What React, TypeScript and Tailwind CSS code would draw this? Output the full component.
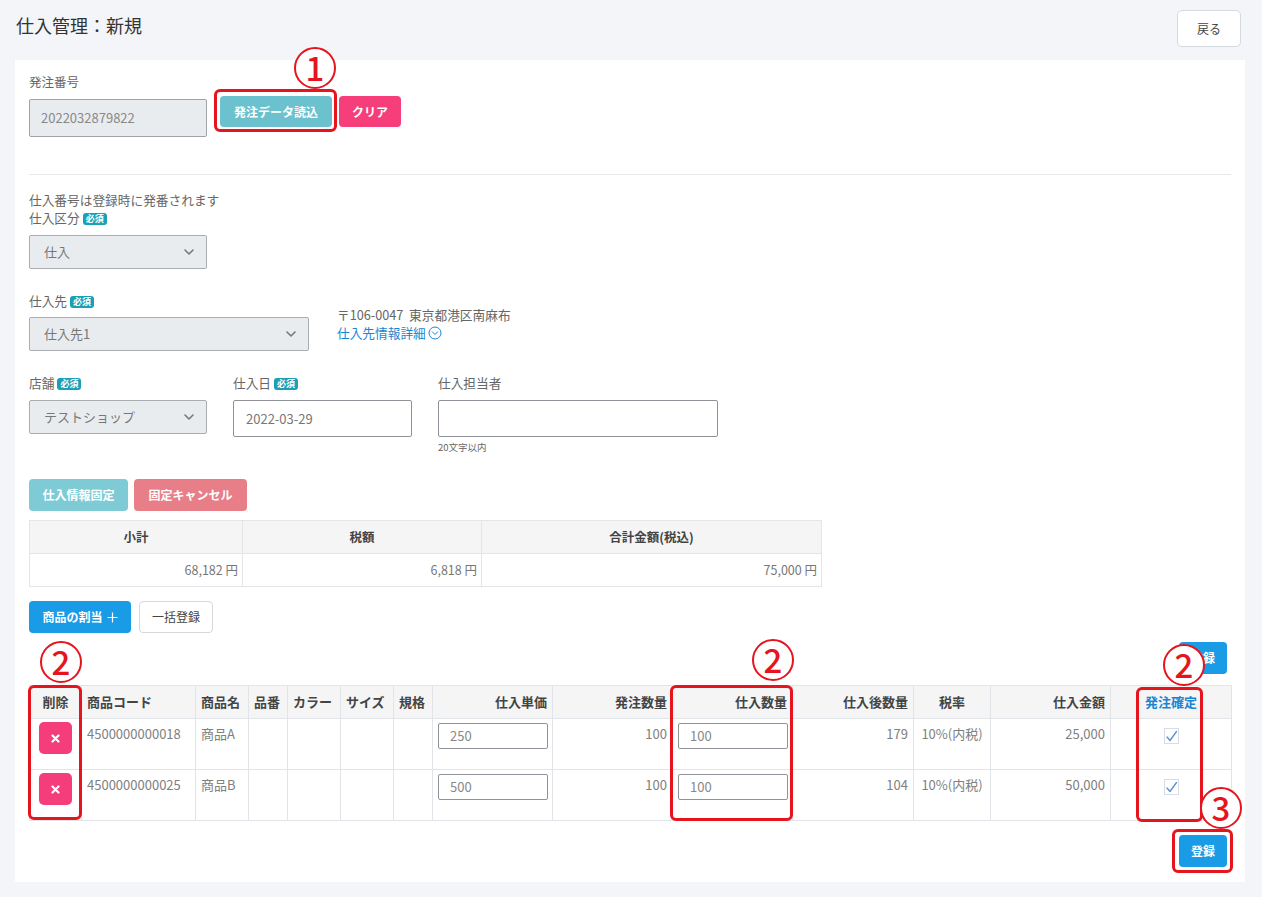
import React from 'react';

function Req() {
  return (
    <span className="ml-[3px] inline-block rounded-[3px] bg-[#1a9fb5] px-[3px] align-[1px] text-[9px] font-bold leading-[12px] text-white">
      必須
    </span>
  );
}

function FakeSelect({ value, width }: { value: string; width: string }) {
  return (
    <div className={`${width} flex h-[34px] items-center justify-between rounded-[2px] border border-[#a9adb2] bg-[#e9ecef] pl-[14px] pr-[12px] text-[13px] text-[#777]`}>
      <span>{value}</span>
      <svg width="10" height="6" viewBox="0 0 10 6" fill="none">
        <path d="M1 1l4 4 4-4" stroke="#777" strokeWidth="1.6" strokeLinecap="round" strokeLinejoin="round" />
      </svg>
    </div>
  );
}

function Circled({ n, x, y }: { n: string; x: number; y: number }) {
  return (
    <div
      className="absolute flex h-[42px] w-[42px] items-center justify-center rounded-full border-[2.5px] border-[#e5141d] bg-white text-[33px] font-medium leading-none text-[#e5141d]"
      style={{ left: x - 21, top: y - 21 }}
    >
      <span className="-mt-[1px]">{n}</span>
    </div>
  );
}

function RedBox({ x, y, w, h }: { x: number; y: number; w: number; h: number }) {
  return (
    <div
      className="pointer-events-none absolute rounded-[6px] border-[3px] border-[#e5141d]"
      style={{ left: x, top: y, width: w, height: h }}
    />
  );
}

function Check() {
  return (
    <div className="mx-auto mt-[9px] flex h-[16px] w-[15px] items-center justify-center border border-[#d6dde6] bg-white">
      <svg width="13" height="12" viewBox="0 0 13 12" fill="none">
        <path d="M2 7l3 3.5L11.5 1.5" stroke="#5a8fd0" strokeWidth="1.3" strokeLinecap="round" strokeLinejoin="round" />
      </svg>
    </div>
  );
}

function DelBtn() {
  return (
    <div className="mx-auto mt-[3px] flex h-[32px] w-[33px] items-center justify-center rounded-[5px] bg-[#f53d7c]">
      <svg width="9" height="9" viewBox="0 0 9 9">
        <path d="M1.5 1.5l6 6M7.5 1.5l-6 6" stroke="white" strokeWidth="2.2" strokeLinecap="round" />
      </svg>
    </div>
  );
}

const rows = [
  { code: '4500000000018', name: '商品A', price: '250', order: '100', qty: '100', after: '179', amount: '25,000' },
  { code: '4500000000025', name: '商品B', price: '500', order: '100', qty: '100', after: '104', amount: '50,000' },
];

export default function App() {
  const th = 'border border-[#e1e5ea] px-[5px] h-[33px] text-[13px] font-bold text-[#444]';
  const td = 'border border-[#e1e5ea] px-[5px] pt-[6px] align-top text-[13px] leading-[18px] text-[#808080] h-[51px]';
  return (
    <div className="relative min-h-[897px] bg-[#f3f5f9] font-['Noto_Sans_CJK_JP','Noto_Sans',sans-serif] text-[#555]">
      <div className="flex items-start justify-between pl-[16px] pr-[21px] pt-[10px]">
        <h1 className="mt-[3px] text-[18px] leading-[24px] text-[#333]">仕入管理：新規</h1>
        <button className="h-[37px] w-[64px] rounded-[5px] border border-[#d5dae0] bg-white text-[12px] text-[#444]">戻る</button>
      </div>

      <div className="ml-[15px] mr-[17px] mt-[13px] bg-white px-[14px] pb-[15px] pt-[13px]">
        <div className="text-[12.5px] leading-[18px] text-[#666]">発注番号</div>
        <div className="mt-[5px] flex items-start">
          <div className="mt-[3px] flex h-[38px] w-[178px] items-center rounded-[2px] border border-[#a0a4a9] bg-[#e9ecef] pl-[11px] text-[13px] text-[#888]">
            2022032879822
          </div>
          <button className="ml-[13px] h-[31px] w-[112px] rounded-[4px] bg-[#6bc1cd] text-[12px] font-bold text-white">発注データ読込</button>
          <button className="ml-[7px] h-[31px] w-[62px] rounded-[4px] bg-[#f63e7a] text-[12px] font-bold text-white">クリア</button>
        </div>

        <div className="mt-[37px] border-t border-[#e6e8eb]" />

        <div className="mt-[16px] text-[12.7px] leading-[18px] text-[#666]">仕入番号は登録時に発番されます</div>
        <div className="text-[12.7px] leading-[18px] text-[#666]">
          仕入区分<Req />
        </div>
        <div className="mt-[8px]">
          <FakeSelect value="仕入" width="w-[178px]" />
        </div>

        <div className="mt-[23px] flex items-start">
          <div>
            <div className="text-[12.7px] leading-[18px] text-[#666]">
              仕入先<Req />
            </div>
            <div className="mt-[7px]">
              <FakeSelect value="仕入先1" width="w-[280px]" />
            </div>
          </div>
          <div className="ml-[28px] mt-[14px] text-[12.7px] leading-[18px]">
            <div className="text-[#666]">〒106-0047&nbsp; 東京都港区南麻布</div>
            <div className="flex items-center text-[#1a86d0]">
              仕入先情報詳細
              <svg className="ml-[2px]" width="14" height="14" viewBox="0 0 14 14" fill="none">
                <circle cx="7" cy="7" r="6" stroke="#1a86d0" strokeWidth="1" />
                <path d="M4.3 5.8L7 8.5l2.7-2.7" stroke="#1a86d0" strokeWidth="1" strokeLinecap="round" strokeLinejoin="round" />
              </svg>
            </div>
          </div>
        </div>

        <div className="mt-[23px] flex items-start gap-[26px]">
          <div className="w-[178px]">
            <div className="text-[12.7px] leading-[18px] text-[#666]">
              店舗<Req />
            </div>
            <div className="mt-[8px]">
              <FakeSelect value="テストショップ" width="w-[178px]" />
            </div>
          </div>
          <div className="w-[179px]">
            <div className="text-[12.7px] leading-[18px] text-[#666]">
              仕入日<Req />
            </div>
            <div className="mt-[8px] flex h-[37px] items-center rounded-[2px] border border-[#8f9399] bg-white pl-[12px] text-[13px] text-[#777]">
              2022-03-29
            </div>
          </div>
          <div className="w-[280px]">
            <div className="text-[12.7px] leading-[18px] text-[#666]">仕入担当者</div>
            <div className="mt-[8px] h-[37px] rounded-[2px] border border-[#8f9399] bg-white" />
            <div className="mt-[3px] text-[9.5px] leading-[14px] text-[#666]">20文字以内</div>
          </div>
        </div>

        <div className="mt-[25px] flex gap-[6px]">
          <button className="h-[32px] w-[99px] rounded-[4px] bg-[#7ecbd6] text-[12px] font-bold text-white">仕入情報固定</button>
          <button className="h-[32px] w-[113px] rounded-[4px] bg-[#e77e88] text-[12px] font-bold text-white">固定キャンセル</button>
        </div>

        <table className="mt-[9px] w-[792px] table-fixed border-collapse">
          <colgroup>
            <col className="w-[213px]" />
            <col className="w-[239px]" />
            <col className="w-[340px]" />
          </colgroup>
          <thead>
            <tr className="bg-[#f5f5f6]">
              <th className="h-[33px] border border-[#e3e5e8] text-center text-[12.5px] font-bold text-[#444]">小計</th>
              <th className="h-[33px] border border-[#e3e5e8] text-center text-[12.5px] font-bold text-[#444]">税額</th>
              <th className="h-[33px] border border-[#e3e5e8] text-center text-[12.5px] font-bold text-[#444]">合計金額(税込)</th>
            </tr>
          </thead>
          <tbody>
            <tr>
              <td className="h-[33px] border border-[#e3e5e8] pr-[4px] text-right text-[12.5px] text-[#777]">68,182 円</td>
              <td className="h-[33px] border border-[#e3e5e8] pr-[4px] text-right text-[12.5px] text-[#777]">6,818 円</td>
              <td className="h-[33px] border border-[#e3e5e8] pr-[4px] text-right text-[12.5px] text-[#777]">75,000 円</td>
            </tr>
          </tbody>
        </table>

        <div className="mt-[14px] flex gap-[8px]">
          <button className="flex h-[32px] w-[102px] items-center justify-center gap-[4px] rounded-[4px] bg-[#1a9be6] text-[12px] font-bold text-white">
            商品の割当
            <svg width="11" height="11" viewBox="0 0 11 11">
              <path d="M5.5 0.5v10M0.5 5.5h10" stroke="white" strokeWidth="1.2" />
            </svg>
          </button>
          <button className="h-[32px] w-[74px] rounded-[4px] border border-[#d5d9de] bg-white text-[12px] text-[#444]">一括登録</button>
        </div>

        <div className="mt-[9px] flex justify-end pr-[4px]">
          <button className="h-[32px] w-[48px] rounded-[4px] bg-[#1a9be6] text-[12px] font-bold text-white">登録</button>
        </div>

        <table className="mt-[11px] w-[1202px] table-fixed border-collapse">
          <colgroup>
            <col className="w-[52px]" />
            <col className="w-[114px]" />
            <col className="w-[53px]" />
            <col className="w-[39px]" />
            <col className="w-[53px]" />
            <col className="w-[53px]" />
            <col className="w-[39px]" />
            <col className="w-[120px]" />
            <col className="w-[120px]" />
            <col className="w-[120px]" />
            <col className="w-[121px]" />
            <col className="w-[77px]" />
            <col className="w-[120px]" />
            <col className="w-[121px]" />
          </colgroup>
          <thead>
            <tr className="bg-[#f5f5f6]">
              <th className={`${th} text-center`}>削除</th>
              <th className={`${th} text-left`}>商品コード</th>
              <th className={`${th} text-left`}>商品名</th>
              <th className={`${th} text-left`}>品番</th>
              <th className={`${th} text-left`}>カラー</th>
              <th className={`${th} text-left`}>サイズ</th>
              <th className={`${th} text-left`}>規格</th>
              <th className={`${th} text-right`}>仕入単価</th>
              <th className={`${th} text-right`}>発注数量</th>
              <th className={`${th} text-right`}>仕入数量</th>
              <th className={`${th} text-right`}>仕入後数量</th>
              <th className={`${th} text-center`}>税率</th>
              <th className={`${th} text-right`}>仕入金額</th>
              <th className={`${th} text-center !text-[#1a86d0]`}>発注確定</th>
            </tr>
          </thead>
          <tbody>
            {rows.map((r) => (
              <tr key={r.code}>
                <td className={`${td} !pt-0`}>
                  <DelBtn />
                </td>
                <td className={td}>{r.code}</td>
                <td className={td}>{r.name}</td>
                <td className={td} />
                <td className={td} />
                <td className={td} />
                <td className={td} />
                <td className={`${td} !pt-[4px]`}>
                  <div className="flex h-[26px] w-[110px] items-center rounded-[2px] border border-[#8f9399] pl-[11px] text-[13px] text-[#888]">
                    {r.price}
                  </div>
                </td>
                <td className={`${td} text-right`}>{r.order}</td>
                <td className={`${td} !pt-[4px]`}>
                  <div className="flex h-[26px] w-[110px] items-center rounded-[2px] border border-[#8f9399] pl-[11px] text-[13px] text-[#888]">
                    {r.qty}
                  </div>
                </td>
                <td className={`${td} text-right`}>{r.after}</td>
                <td className={`${td} text-center`}>10%(内税)</td>
                <td className={`${td} text-right`}>{r.amount}</td>
                <td className={`${td} !pt-0`}>
                  <Check />
                </td>
              </tr>
            ))}
          </tbody>
        </table>

        <div className="mt-[14px] flex justify-end pr-[4px]">
          <button className="h-[32px] w-[48px] rounded-[4px] bg-[#1a9be6] text-[12px] font-bold text-white">登録</button>
        </div>
      </div>

      <RedBox x={214} y={89} w={123} h={43} />
      <Circled n="1" x={315} y={68} />
      <RedBox x={28} y={685} w={54} h={135} />
      <Circled n="2" x={61} y={662} />
      <RedBox x={670} y={685} w={123} h={136} />
      <Circled n="2" x={773} y={660} />
      <RedBox x={1136} y={687} w={67} h={135} />
      <Circled n="2" x={1184} y={665} />
      <RedBox x={1172} y={829} w={61} h={44} />
      <Circled n="3" x={1221} y={808} />
    </div>
  );
}
